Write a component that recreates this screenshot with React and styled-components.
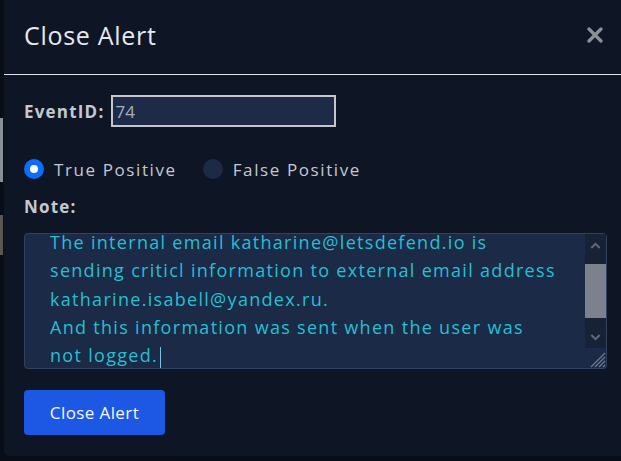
import React, { useEffect, useRef } from "react";
import styled, { createGlobalStyle } from "styled-components";

const Global = createGlobalStyle`
  html, body { margin: 0; padding: 0; background: #080d17; overflow: hidden; }
  body { font-family: "Open Sans", "Noto Sans", sans-serif; }
`;

const Stage = styled.div`
  display: flex;
  width: 621px;
  height: 461px;
  overflow: hidden;
  background: #080d17;
`;

const PeekColumn = styled.div`
  flex: 0 0 4px;
  display: flex;
  flex-direction: column;
  padding-top: 118px;
  gap: 33px;
`;

const PeekBlock = styled.div`
  width: 3px;
  height: ${(p) => p.$h}px;
  background: ${(p) => p.$c};
`;

const Modal = styled.div`
  flex: 0 0 617px;
  height: 456px;
  background: #0e1625;
  border-bottom-left-radius: 6px;
  display: flex;
  flex-direction: column;
`;

const Header = styled.div`
  box-sizing: border-box;
  height: 75px;
  border-bottom: 1px solid #dfe3e8;
  display: flex;
  align-items: center;
  justify-content: space-between;
  padding: 0 18px 4px 20px;
`;

const Title = styled.h2`
  margin: 0;
  font-family: "Open Sans", sans-serif;
  font-weight: 400;
  font-size: 25px;
  letter-spacing: 0.7px;
  color: #e6e9ee;
`;

const CloseX = styled.button`
  border: 0;
  background: transparent;
  padding: 0;
  width: 16px;
  height: 16px;
  display: flex;
  cursor: pointer;
`;

const Body = styled.div`
  display: flex;
  flex-direction: column;
  padding: 20px 14px 0 20px;
`;

const FieldRow = styled.div`
  display: flex;
  align-items: center;
  gap: 7px;
  height: 32px;
`;

const Label = styled.label`
  font-family: "Open Sans", sans-serif;
  font-weight: 700;
  font-size: 17px;
  letter-spacing: 1.2px;
  color: #c4c8d0;
`;

const IdInput = styled.input`
  box-sizing: border-box;
  width: 225px;
  height: 32px;
  border: 2px solid #c3c7cd;
  background: #1d2b48;
  color: #a9b0bd;
  font-family: "Open Sans", sans-serif;
  font-size: 17px;
  padding: 0 2px;
  outline: none;
`;

const RadioRow = styled.div`
  display: flex;
  align-items: center;
  gap: 26px;
  margin-top: 31px;
  height: 22px;
`;

const RadioOption = styled.label`
  display: flex;
  align-items: center;
  gap: 10px;
  font-family: "Open Sans", sans-serif;
  font-size: 17px;
  letter-spacing: 1.6px;
  color: #c4c8d0;
`;

const Radio = styled.input`
  appearance: none;
  margin: 0;
  width: 20px;
  height: 20px;
  border-radius: 50%;
  background: #1d2a45;
  display: grid;
  place-items: center;
  &:checked {
    background: #0d6efd;
  }
  &:checked::after {
    content: "";
    width: 8px;
    height: 8px;
    border-radius: 50%;
    background: #fff;
  }
`;

const NoteLabel = styled(Label)`
  margin-top: 16px;
  line-height: 22px;
`;

const NoteWrap = styled.div`
  position: relative;
  margin-top: 15px;
  width: 583px;
  height: 136px;
`;

const NoteArea = styled.textarea`
  box-sizing: border-box;
  display: block;
  width: 100%;
  height: 100%;
  margin: 0;
  background: #1b2a47;
  border: 1px solid #33425c;
  border-radius: 4px;
  color: #26bfd2;
  font-family: "Open Sans", sans-serif;
  font-size: 18px;
  letter-spacing: 1.3px;
  line-height: 28.3px;
  padding: 19px 36px 19px 25px;
  outline: none;
  resize: none;
  overflow: hidden;
  white-space: pre;
`;

const Caret = styled.span`
  position: absolute;
  left: 136px;
  top: 114px;
  width: 1px;
  height: 21px;
  background: #6fc3e3;
  pointer-events: none;
`;

const ScrollRail = styled.div`
  position: absolute;
  top: 1px;
  right: 1px;
  bottom: 1px;
  width: 21px;
  display: flex;
  flex-direction: column;
  pointer-events: none;
`;

const RailButton = styled.div`
  height: 22px;
  background: #172236;
  display: flex;
  align-items: center;
  justify-content: center;
`;

const RailTrack = styled.div`
  flex: 1;
  background: #172236;
  display: flex;
  flex-direction: column;
  padding: 8px 0 6px;
`;

const RailThumb = styled.div`
  height: 54px;
  background: #7c818e;
`;

const RailCorner = styled.div`
  height: 20px;
  display: flex;
  align-items: flex-end;
  justify-content: flex-end;
`;

const PrimaryButton = styled.button`
  margin-top: 21px;
  align-self: flex-start;
  width: 141px;
  height: 45px;
  border: 0;
  border-radius: 4px;
  background: #1c58e4;
  color: #f4f7ff;
  font-family: "Open Sans", sans-serif;
  font-size: 17px;
  letter-spacing: 0.4px;
  cursor: pointer;
`;

const NOTE_TEXT =
  "The internal email katharine@letsdefend.io is\nsending criticl information to external email address\nkatharine.isabell@yandex.ru.\nAnd this information was sent when the user was\nnot logged.";

const Chevron = ({ up }) => (
  <svg width="11" height="7" viewBox="0 0 11 7">
    <path
      d={up ? "M1.3 6 L5.5 1.8 L9.7 6" : "M1.3 1 L5.5 5.2 L9.7 1"}
      fill="none"
      stroke="#5f697b"
      strokeWidth="2"
    />
  </svg>
);

export default function App() {
  const ref = useRef(null);
  useEffect(() => {
    const el = ref.current;
    if (!el) return;
    el.scrollTop = 25;
    requestAnimationFrame(() => {
      el.scrollTop = 25;
    });
  }, []);

  return (
    <Stage>
      <Global />
      <PeekColumn>
        <PeekBlock $h={64} $c="#8a8e99" />
        <PeekBlock $h={40} $c="#5b5651" />
      </PeekColumn>
      <Modal>
        <Header>
          <Title>Close Alert</Title>
          <CloseX aria-label="Close">
            <svg width="16" height="16" viewBox="0 0 16 16">
              <path d="M2 2 L14 14 M14 2 L2 14" stroke="#8b9099" strokeWidth="3.2" strokeLinecap="round" />
            </svg>
          </CloseX>
        </Header>
        <Body>
          <FieldRow>
            <Label htmlFor="eventid">EventID:</Label>
            <IdInput id="eventid" defaultValue="74" />
          </FieldRow>
          <RadioRow>
            <RadioOption>
              <Radio type="radio" name="verdict" defaultChecked />
              True Positive
            </RadioOption>
            <RadioOption>
              <Radio type="radio" name="verdict" />
              False Positive
            </RadioOption>
          </RadioRow>
          <NoteLabel>Note:</NoteLabel>
          <NoteWrap>
            <NoteArea ref={ref} defaultValue={NOTE_TEXT} spellCheck={false} />
            <Caret />
            <ScrollRail>
              <RailButton>
                <Chevron up />
              </RailButton>
              <RailTrack>
                <RailThumb />
              </RailTrack>
              <RailButton>
                <Chevron />
              </RailButton>
              <RailCorner>
                <svg width="20" height="20" viewBox="0 0 20 20">
                  <path
                    d="M19 5 L5 19 M19 9 L9 19 M19 13 L13 19 M19 17 L17 19"
                    stroke="#6f7a8d"
                    strokeWidth="1.2"
                  />
                </svg>
              </RailCorner>
            </ScrollRail>
          </NoteWrap>
          <PrimaryButton>Close Alert</PrimaryButton>
        </Body>
      </Modal>
    </Stage>
  );
}
